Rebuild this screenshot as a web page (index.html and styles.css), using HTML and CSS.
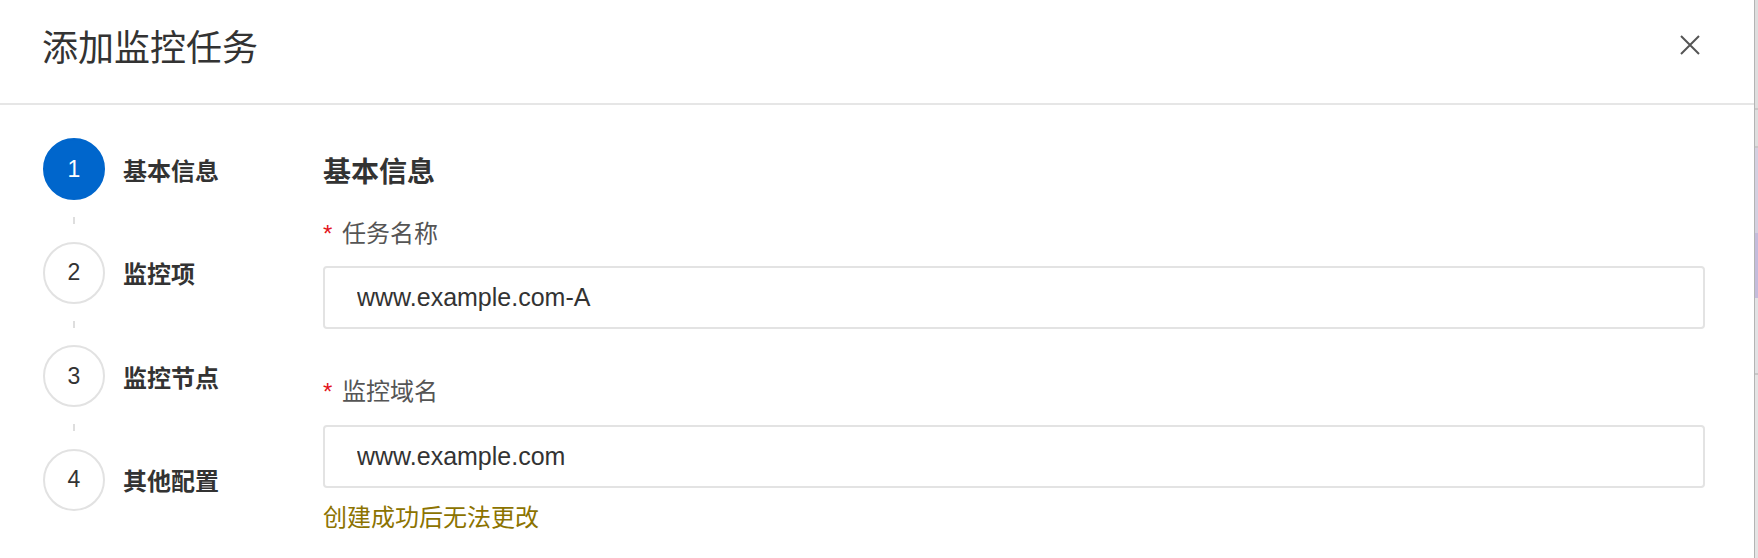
FILE: index.html
```html
<!DOCTYPE html>
<html lang="zh-CN">
<head>
<meta charset="utf-8">
<title>添加监控任务</title>
<link rel="stylesheet" href="styles.css">
</head>
<body>
<div class="page">
  <div class="drawer">
    <header class="drawer-header">
      <h1 class="drawer-title">添加监控任务</h1>
      <button class="close-btn" type="button" aria-label="关闭">
        <svg width="20" height="20" viewBox="0 0 20 20"><path d="M1 1L19 19M19 1L1 19" stroke="#555" stroke-width="2" fill="none"/></svg>
      </button>
    </header>
    <div class="drawer-body">
      <ol class="steps">
        <li class="step step-active"><span class="step-num">1</span><span class="step-label">基本信息</span></li>
        <li class="step-connector"><span class="dash"></span></li>
        <li class="step"><span class="step-num">2</span><span class="step-label">监控项</span></li>
        <li class="step-connector"><span class="dash"></span></li>
        <li class="step"><span class="step-num">3</span><span class="step-label">监控节点</span></li>
        <li class="step-connector"><span class="dash"></span></li>
        <li class="step"><span class="step-num">4</span><span class="step-label">其他配置</span></li>
      </ol>
      <section class="form">
        <h2 class="form-heading">基本信息</h2>
        <div class="form-item">
          <label class="form-label"><span class="required">*</span>任务名称</label>
          <input class="form-input" type="text" value="www.example.com-A">
        </div>
        <div class="form-item">
          <label class="form-label"><span class="required">*</span>监控域名</label>
          <input class="form-input" type="text" value="www.example.com">
          <div class="form-help">创建成功后无法更改</div>
        </div>
      </section>
    </div>
  </div>
  <div class="backdrop-edge"></div>
</div>
</body>
</html>
```
FILE: styles.css
```css
* { box-sizing: border-box; }
html, body { margin: 0; padding: 0; }
body {
  width: 1758px;
  height: 558px;
  overflow: hidden;
  background: #fff;
  font-family: "Noto Sans CJK SC", "Liberation Sans", sans-serif;
  color: #333;
}
.page {
  display: flex;
  height: 558px;
}
.drawer {
  width: 1754px;
  background: #fff;
  display: flex;
  flex-direction: column;
  overflow: hidden;
}
.backdrop-edge {
  width: 4px;
  border-left: 1px solid #b4b4b4;
  background: linear-gradient(to bottom,
    #dedede 0, #dedede 108px, #c8c8c8 108px, #c8c8c8 110px,
    #dedede 110px, #dedede 146px, #c8c8c8 146px, #c8c8c8 148px,
    #d4d0e0 148px, #d4d0e0 233px, #c4bcdb 233px, #c4bcdb 298px,
    #e2e2e4 298px, #e2e2e4 373px, #c8c8c8 373px, #c8c8c8 375px,
    #e4e4e4 375px);
}
.drawer-header {
  flex: none;
  height: 105px;
  padding: 0 54px 13px 42px;
  border-bottom: 2px solid #e6e6e6;
  display: flex;
  align-items: center;
}
.drawer-title {
  margin: 0;
  font-size: 36px;
  line-height: 50px;
  font-weight: 400;
  color: #333;
}
.close-btn {
  margin-left: auto;
  width: 20px;
  height: 20px;
  padding: 0;
  border: 0;
  background: transparent;
  display: flex;
}
.drawer-body {
  flex: none;
  display: flex;
  padding-top: 33px;
}
.steps {
  list-style: none;
  margin: 0;
  padding: 0 0 0 43px;
  width: 323px;
  display: flex;
  flex-direction: column;
}
.step {
  display: flex;
  align-items: center;
  height: 62px;
}
.step-num {
  width: 62px;
  height: 62px;
  border-radius: 50%;
  border: 2px solid #e2e2e2;
  display: flex;
  align-items: center;
  justify-content: center;
  font-family: "Liberation Sans", sans-serif;
  font-size: 23px;
  color: #333;
  flex: none;
}
.step-active .step-num {
  background: #0066cc;
  border-color: #0066cc;
  color: #fff;
}
.step-label {
  margin-left: 18px;
  font-size: 24px;
  font-weight: 700;
  color: #333;
}
.step-connector {
  height: 41.5px;
  width: 62px;
  display: flex;
  align-items: center;
  justify-content: center;
}
.dash {
  width: 2px;
  height: 7px;
  background: #dedede;
}
.form {
  flex: 1;
  padding: 12px 49px 0 0;
}
.form-heading {
  margin: 0 0 22.5px;
  font-size: 28px;
  line-height: 41px;
  font-weight: 700;
  color: #333;
}
.form-item {
  margin-bottom: 43px;
}
.form-label {
  display: block;
  font-size: 24px;
  line-height: 35px;
  color: #555;
  margin-bottom: 15.5px;
}
.required {
  display: inline-block;
  width: 19px;
  color: #e3141d;
  font-family: "Liberation Sans", sans-serif;
}
.form-input {
  display: block;
  width: 100%;
  height: 63px;
  margin: 0;
  border: 2px solid #e3e3e3;
  border-radius: 4px;
  padding: 0 0 0 32px;
  font-family: "Liberation Sans", sans-serif;
  font-size: 25px;
  color: #333;
  background: #fff;
  outline: none;
}
.form-help {
  margin-top: 10.5px;
  font-size: 24px;
  line-height: 35px;
  color: #8c7300;
}
```
